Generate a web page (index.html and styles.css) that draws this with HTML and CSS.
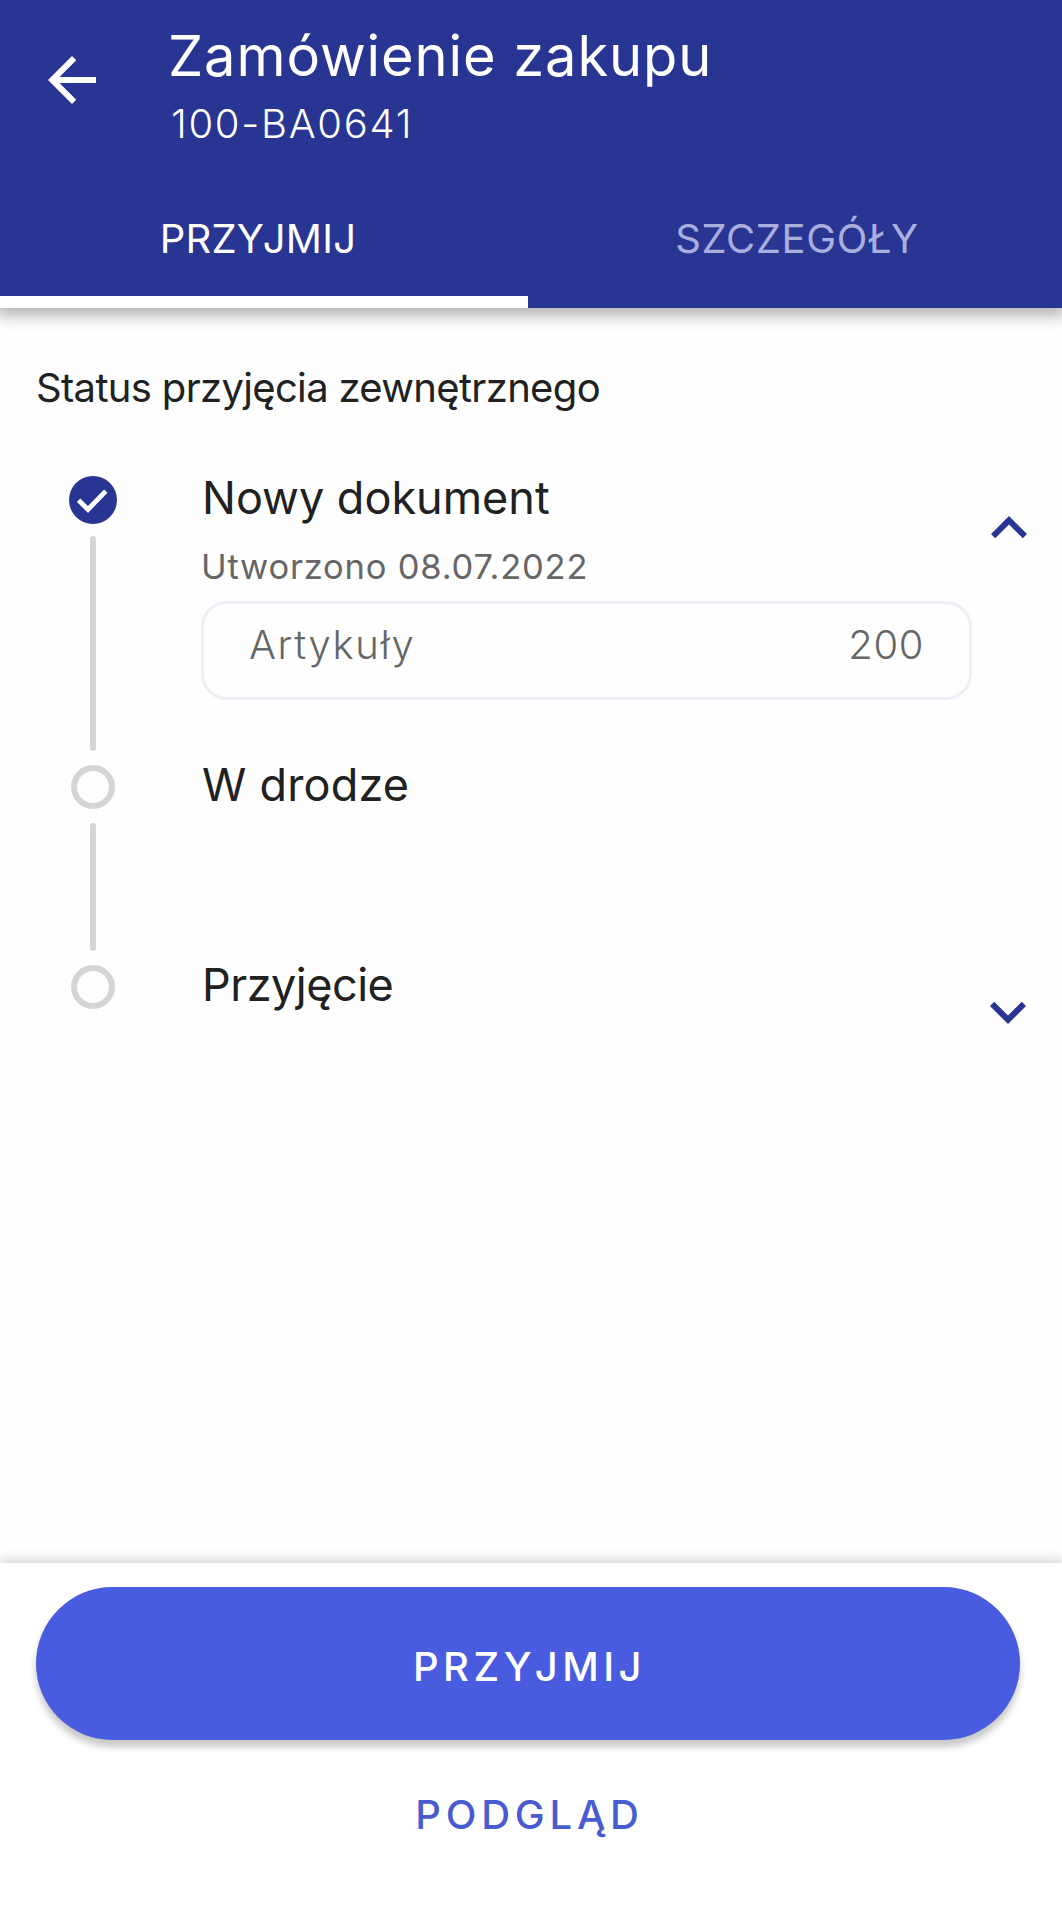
FILE: index.html
```
<!DOCTYPE html>
<html lang="pl">
<head>
    <meta charset="UTF-8">
    <meta name="viewport" content="width=device-width, initial-scale=1.0">
    <title>Zamówienie zakupu</title>
    <link rel="stylesheet" href="styles.css">
</head>
<body>
    <header class="header">
        <div class="app-bar">
            <svg class="back" viewBox="0 0 24 24"><path d="M20 11H7.83l5.59-5.59L12 4l-8 8 8 8 1.41-1.41L7.83 13H20v-2z"/></svg>
            <div class="titles">
                <h1>Zamówienie zakupu</h1>
                <p>100-BA0641</p>
            </div>
        </div>
        <nav class="tabs">
            <a class="tab active">PRZYJMIJ</a>
            <a class="tab details">SZCZEGÓŁY</a>
        </nav>
    </header>

    <main>
        <h2 class="section-title">Status przyjęcia zewnętrznego</h2>

        <div class="step step-new">
            <div class="rail">
                <div class="marker">
                    <svg viewBox="0 0 48 48">
                        <circle cx="24" cy="24" r="24"/>
                        <path d="M9.6 24.2l9.4 9.3 17.8-18.3"/>
                    </svg>
                </div>
                <div class="line"></div>
            </div>
            <div class="content">
                <h3>Nowy dokument</h3>
                <p class="created">Utworzono 08.07.2022</p>
                <div class="items">
                    <span class="items-label">Artykuły</span>
                    <span class="items-count">200</span>
                </div>
            </div>
            <svg class="toggle" viewBox="0 0 24 24"><path d="M12 8l-6 6 1.41 1.41L12 10.83l4.59 4.58L18 14z"/></svg>
        </div>

        <div class="step step-transit">
            <div class="rail">
                <div class="marker"><div class="ring"></div></div>
                <div class="line"></div>
            </div>
            <div class="content">
                <h3>W drodze</h3>
            </div>
        </div>

        <div class="step step-receipt">
            <div class="rail">
                <div class="marker"><div class="ring"></div></div>
            </div>
            <div class="content">
                <h3>Przyjęcie</h3>
            </div>
            <svg class="toggle" viewBox="0 0 24 24"><path d="M16.59 8.59L12 13.17 7.41 8.59 6 10l6 6 6-6z"/></svg>
        </div>
    </main>

    <footer>
        <button class="btn primary">PRZYJMIJ</button>
        <button class="btn text">PODGLĄD</button>
    </footer>
</body>
</html>
```
FILE: styles.css
```
* {
    box-sizing: border-box;
    margin: 0;
    padding: 0;
}
body {
    display: flex;
    flex-direction: column;
    height: 1909px;
    overflow-x: hidden;
    background: #fefefe;
    font-family: Inter, "Liberation Sans", sans-serif;
    color: #212121;
    white-space: nowrap;
}
h1, h2, h3 {
    font-weight: 400;
}

/* header */
.header {
    height: 308px;
    background: #283593;
    color: #fff;
    box-shadow: 0 4px 14px 4px rgba(0, 0, 0, 0.29);
}
.app-bar {
    display: flex;
    height: 180px;
    padding-left: 36px;
}
.back {
    width: 72px;
    height: 72px;
    margin-top: 44px;
    fill: #fff;
}
.titles {
    padding: 27px 0 0 60px;
}
.titles h1 {
    font-size: 56px;
    line-height: 59px;
    letter-spacing: 0.9px;
}
.titles p {
    padding-left: 3px;
    font-size: 40px;
    line-height: 75px;
    font-weight: 300;
    letter-spacing: 1.7px;
}
.tabs {
    display: flex;
    height: 128px;
}
.tab {
    flex: 1;
    font-size: 40px;
    line-height: 117px;
    text-align: center;
    border-bottom: 12px solid transparent;
}
.tab.active {
    flex: 0 0 528px;
    padding-right: 12px;
    letter-spacing: 0.2px;
    border-color: #fff;
}
.tab.details {
    padding-left: 4px;
    letter-spacing: 0.6px;
    color: #a9aedd;
}

/* steps */
main {
    flex: 1;
    padding-top: 50px;
}
.section-title {
    margin: 0 0 59px 36px;
    font-size: 40px;
    line-height: 59px;
    letter-spacing: -0.67px;
}
.step {
    display: flex;
    padding-left: 69px;
}
.step-new {
    height: 287px;
}
.step-transit {
    height: 200px;
}
.rail {
    display: flex;
    flex-direction: column;
    align-items: center;
    width: 48px;
}
.marker {
    display: flex;
    align-items: center;
    justify-content: center;
    width: 48px;
    height: 48px;
}
.marker circle {
    fill: #283593;
}
.marker path {
    fill: none;
    stroke: #fff;
    stroke-width: 4.8;
}
.ring {
    width: 44px;
    height: 44px;
    border: 6px solid #d5d5d5;
    border-radius: 50%;
}
.line {
    flex: 1;
    width: 6px;
    margin: 12px 0;
    border-radius: 3px;
    background: #d5d5d5;
}
.content {
    width: 771px;
    margin-left: 84px;
}
.content h3 {
    padding-left: 1px;
    font-size: 45px;
    line-height: 44px;
}
.step-transit h3 {
    letter-spacing: 0.2px;
}
.step-receipt h3 {
    letter-spacing: -0.5px;
}
.created {
    margin: 23px 0 11px;
    font-size: 34.5px;
    line-height: 47px;
    letter-spacing: 0.8px;
    color: #666;
}
.items {
    display: flex;
    justify-content: space-between;
    height: 99px;
    padding: 0 45px;
    border: 3px solid #eeeef6;
    border-radius: 26px;
    font-size: 40px;
    font-weight: 300;
    line-height: 81px;
    color: #666;
}
.items-label {
    letter-spacing: 1.6px;
}
.items-count {
    letter-spacing: 0.6px;
}
.toggle {
    width: 72px;
    height: 72px;
    margin: 16px 0 0 1px;
    fill: #283593;
}
.step-receipt .toggle {
    margin: 13px 0 0;
}

/* bottom actions */
footer {
    height: 346px;
    padding: 24px 42px 0 36px;
    background: #fff;
    box-shadow: 0 0 12px 2px rgba(0, 0, 0, 0.2);
}
.btn {
    display: block;
    width: 100%;
    padding-left: 3px;
    border: none;
    background: none;
    font: 500 40px/1 Inter, "Liberation Sans", sans-serif;
    letter-spacing: 4.5px;
}
.btn.primary {
    height: 153px;
    padding-top: 6px;
    border-radius: 77px;
    background: #495ce0;
    color: #fff;
    box-shadow: 0 7px 7px rgba(0, 0, 0, 0.22);
}
.btn.text {
    height: 149px;
    letter-spacing: 4.8px;
    color: #495ccf;
}
```
